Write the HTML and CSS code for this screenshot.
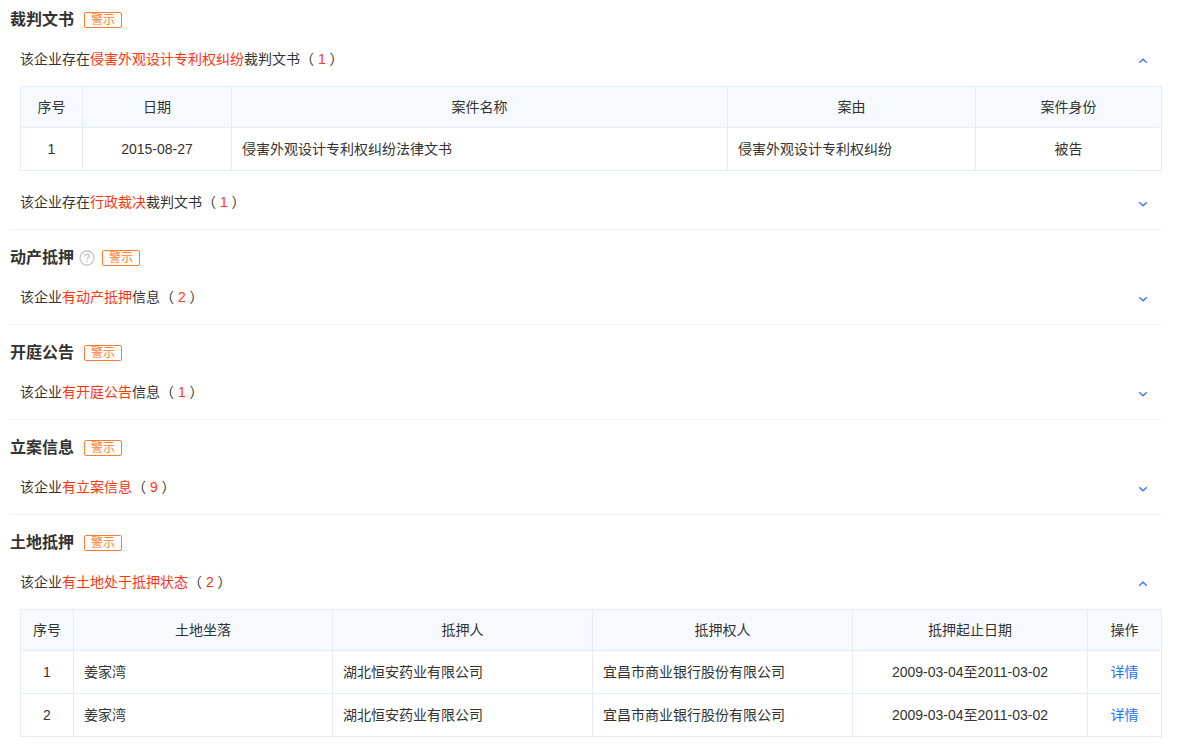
FILE: index.html
```html
<!DOCTYPE html>
<html lang="zh-CN">
<head>
<meta charset="utf-8">
<title>风险信息</title>
<link rel="stylesheet" href="styles.css">
</head>
<body>
<svg width="0" height="0" class="sprite" aria-hidden="true">
  <symbol id="chevron" viewBox="0 0 10 6"><path d="M1.2 1.2 L5 4.8 L8.8 1.2" fill="none" stroke="currentColor" stroke-width="1.3"/></symbol>
</svg>
<main class="page">
  <section class="section">
    <div class="heading"><h2 class="title">裁判文书</h2><span class="badge">警示</span></div>
    <div class="row">
      <p class="summary">该企业存在<em class="hit">侵害外观设计专利权纠纷</em>裁判文书（ <em class="hit">1</em> ）</p>
      <button class="toggle open" type="button" aria-label="收起" aria-expanded="true"><svg class="chevron"><use href="#chevron"/></svg></button>
    </div>
    <table class="table spaced">
      <colgroup><col class="w62"><col class="w149"><col class="w496"><col class="w248"><col class="w186"></colgroup>
      <thead><tr><th>序号</th><th>日期</th><th>案件名称</th><th>案由</th><th>案件身份</th></tr></thead>
      <tbody>
        <tr><td>1</td><td>2015-08-27</td><td class="left">侵害外观设计专利权纠纷法律文书</td><td class="left">侵害外观设计专利权纠纷</td><td>被告</td></tr>
      </tbody>
    </table>
    <div class="row">
      <p class="summary">该企业存在<em class="hit">行政裁决</em>裁判文书（ <em class="hit">1</em> ）</p>
      <button class="toggle" type="button" aria-label="展开" aria-expanded="false"><svg class="chevron"><use href="#chevron"/></svg></button>
    </div>
  </section>

  <section class="section">
    <div class="heading">
      <h2 class="title">动产抵押</h2>
      <svg class="help" viewBox="0 0 16 16" role="img" aria-label="说明"><circle cx="8" cy="8" r="7" fill="none" stroke="currentColor" stroke-width="1.3"/><path d="M5.7 6.5 C5.7 3.4 10.3 3.4 10.3 6.3 C10.3 7.8 8 7.9 8 9.6 M8 10.8 V12.2" fill="none" stroke="currentColor" stroke-width="1.5"/></svg>
      <span class="badge">警示</span>
    </div>
    <div class="row">
      <p class="summary">该企业<em class="hit">有动产抵押</em>信息（ <em class="hit">2</em> ）</p>
      <button class="toggle" type="button" aria-label="展开" aria-expanded="false"><svg class="chevron"><use href="#chevron"/></svg></button>
    </div>
  </section>

  <section class="section">
    <div class="heading"><h2 class="title">开庭公告</h2><span class="badge">警示</span></div>
    <div class="row">
      <p class="summary">该企业<em class="hit">有开庭公告</em>信息（ <em class="hit">1</em> ）</p>
      <button class="toggle" type="button" aria-label="展开" aria-expanded="false"><svg class="chevron"><use href="#chevron"/></svg></button>
    </div>
  </section>

  <section class="section">
    <div class="heading"><h2 class="title">立案信息</h2><span class="badge">警示</span></div>
    <div class="row">
      <p class="summary">该企业<em class="hit">有立案信息</em>（ <em class="hit">9</em> ）</p>
      <button class="toggle" type="button" aria-label="展开" aria-expanded="false"><svg class="chevron"><use href="#chevron"/></svg></button>
    </div>
  </section>

  <section class="section">
    <div class="heading"><h2 class="title">土地抵押</h2><span class="badge">警示</span></div>
    <div class="row">
      <p class="summary">该企业<em class="hit">有土地处于抵押状态</em>（ <em class="hit">2</em> ）</p>
      <button class="toggle open" type="button" aria-label="收起" aria-expanded="true"><svg class="chevron"><use href="#chevron"/></svg></button>
    </div>
    <table class="table">
      <colgroup><col class="w53"><col class="w259"><col class="w260"><col class="w260"><col class="w235"><col class="w74"></colgroup>
      <thead><tr><th>序号</th><th>土地坐落</th><th>抵押人</th><th>抵押权人</th><th>抵押起止日期</th><th>操作</th></tr></thead>
      <tbody>
        <tr><td>1</td><td class="left">姜家湾</td><td class="left">湖北恒安药业有限公司</td><td class="left">宜昌市商业银行股份有限公司</td><td>2009-03-04至2011-03-02</td><td><a class="link" href="#">详情</a></td></tr>
        <tr><td>2</td><td class="left">姜家湾</td><td class="left">湖北恒安药业有限公司</td><td class="left">宜昌市商业银行股份有限公司</td><td>2009-03-04至2011-03-02</td><td><a class="link" href="#">详情</a></td></tr>
      </tbody>
    </table>
  </section>
</main>
</body>
</html>
```
FILE: styles.css
```css
* { box-sizing: border-box; }
body {
  margin: 0;
  background: #fff;
  color: #333;
  font: 14px/20px "Liberation Sans", "Noto Sans CJK SC", sans-serif;
}
.sprite { display: none; }
.page { padding: 0 15px 12px 10px; }
.section {
  padding-top: 17px;
  border-bottom: 1px solid #f0f1f3;
}
.section:first-child { padding-top: 9px; }
.section:last-child { border-bottom: 0; }
.heading {
  display: flex;
  align-items: center;
  height: 22px;
  margin-bottom: 1px;
}
.title {
  margin: 0;
  font-size: 16px;
  line-height: 22px;
  font-weight: 700;
}
.badge {
  margin-left: 10px;
  padding: 0 6px;
  border: 1px solid #ff7d2e;
  border-radius: 2px;
  color: #ff7d2e;
  font-size: 12px;
  line-height: 14px;
}
.help {
  width: 16px;
  height: 16px;
  margin-left: 5px;
  color: #c8c8c8;
}
.help + .badge { margin-left: 7px; }
.row {
  display: flex;
  align-items: center;
  justify-content: space-between;
  height: 54px;
  padding: 0 14px 0 10px;
}
.summary { margin: 0; }
.hit {
  color: #ff3413;
  font-style: normal;
}
.toggle {
  display: flex;
  padding: 4px 0 0;
  border: 0;
  background: none;
  color: #3674ff;
  cursor: pointer;
}
.chevron {
  width: 10px;
  height: 6px;
}
.open .chevron { transform: rotate(180deg); }
.table {
  width: calc(100% - 10px);
  margin-left: 10px;
  border-collapse: collapse;
  table-layout: fixed;
}
.spaced { margin-bottom: 4px; }
.table th,
.table td {
  height: 43px;
  padding: 0 10px;
  border: 1px solid #e1ecfc;
  font-weight: 400;
  text-align: center;
}
.table th {
  height: 41px;
  background: #f6faff;
}
.table .left { text-align: left; }
.link {
  color: #2672ff;
  text-decoration: none;
}
.w53 { width: 53px; }
.w62 { width: 62px; }
.w74 { width: 74px; }
.w149 { width: 149px; }
.w186 { width: 186px; }
.w235 { width: 235px; }
.w248 { width: 248px; }
.w259 { width: 259px; }
.w260 { width: 260px; }
.w496 { width: 496px; }
```
